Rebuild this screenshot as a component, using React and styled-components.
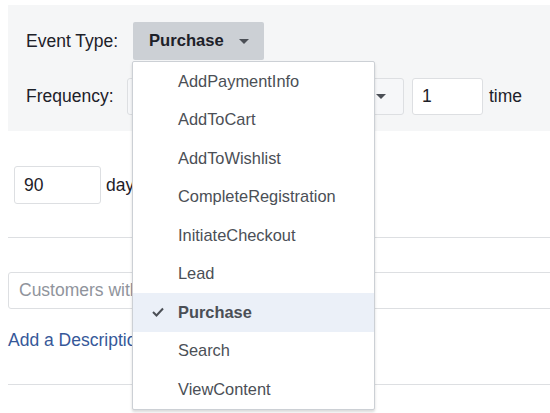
import React from "react"
import styled, { createGlobalStyle } from "styled-components"

const GlobalStyle = createGlobalStyle`
  html, body {
    margin: 0;
    padding: 0;
    background: #fff;
    overflow: hidden;
  }
  body {
    font-family: "Liberation Sans", Helvetica, Arial, sans-serif;
    font-size: 17.5px;
    color: #1d2129;
  }
`

const Page = styled.div`
  width: 620px;
  min-height: 413px;
  padding: 5px 0 0 8px;
  box-sizing: border-box;
`

const Panel = styled.div`
  background: #f5f6f7;
  padding: 17px 18px 16px;
  display: flex;
  flex-direction: column;
  gap: 18px;
`

const Row = styled.div`
  display: flex;
  align-items: center;
  height: ${p => p.h || 38}px;
`

const Label = styled.span`
  flex: 0 0 ${p => p.w}px;
  color: #1d2129;
  white-space: nowrap;
`

const DropWrap = styled.div`
  position: relative;
`

const TypeButton = styled.div`
  display: flex;
  align-items: center;
  width: 131px;
  height: 38px;
  box-sizing: border-box;
  padding: 0 16px;
  background: #ccd0d5;
  border-radius: 2px;
  font-size: 16.6px;
  font-weight: bold;
  color: #1d2129;
`

const Caret = styled.span`
  width: 0;
  height: 0;
  border-left: 5px solid transparent;
  border-right: 5px solid transparent;
  border-top: 5px solid ${p => p.color || "#4b4f56"};
  margin-left: ${p => p.ml || 14}px;
`

const Select = styled.div`
  width: 277px;
  height: 37px;
  box-sizing: border-box;
  border: 1px solid #dddfe2;
  border-radius: 3px;
  background: #f6f7f9;
  display: flex;
  align-items: center;
  justify-content: flex-end;
  padding-right: 17px;
`

const Input = styled.div`
  width: ${p => p.w}px;
  height: ${p => p.h || 38}px;
  box-sizing: border-box;
  border: 1px solid #dddfe2;
  border-radius: 3px;
  background: #fff;
  display: flex;
  align-items: center;
  padding-left: ${p => p.pl || 9}px;
  color: ${p => (p.placeholder ? "#90949c" : "#1d2129")};
  margin-left: ${p => p.ml || 0}px;
  white-space: nowrap;
  overflow: hidden;
`

const Unit = styled.span`
  margin-left: ${p => p.ml}px;
  white-space: nowrap;
`

const Section = styled.div`
  padding-left: ${p => p.pl || 0}px;
  margin-top: ${p => p.mt || 0}px;
`

const Divider = styled.div`
  height: 1px;
  background: #dddfe2;
  margin-top: ${p => p.mt}px;
`

const DescLink = styled.a`
  display: block;
  margin-top: 20px;
  color: #365899;
  text-decoration: none;
  line-height: 22px;
`

const Menu = styled.ul`
  position: absolute;
  top: 39px;
  left: -1px;
  width: 241px;
  margin: 0;
  padding: 0;
  list-style: none;
  background: #fff;
  border: 1px solid #ccd0d5;
  border-radius: 2px;
  box-shadow: 0 2px 3px rgba(0, 0, 0, 0.15);
  font-size: 16.4px;
  z-index: 10;
`

const Item = styled.li`
  position: relative;
  height: 38.5px;
  display: flex;
  align-items: center;
  padding-left: 45px;
  color: #4b4f56;
  font-weight: ${p => (p.selected ? "bold" : "normal")};
  background: ${p => (p.selected ? "#ebf0f8" : "transparent")};
`

const Check = styled.svg`
  position: absolute;
  left: 19px;
  top: 50%;
  margin-top: -5px;
`

const events = [
  "AddPaymentInfo",
  "AddToCart",
  "AddToWishlist",
  "CompleteRegistration",
  "InitiateCheckout",
  "Lead",
  "Purchase",
  "Search",
  "ViewContent",
]

const App = () => {
  const current = "Purchase"
  return (
    <Page>
      <GlobalStyle />
      <Panel>
        <Row>
          <Label w={107}>Event Type:</Label>
          <DropWrap>
            <TypeButton>
              {current}
              <Caret color="#4b4f56" ml={15} />
            </TypeButton>
            <Menu>
              {events.map(ev => (
                <Item key={ev} selected={ev === current}>
                  {ev === current && (
                    <Check width="12" height="10" viewBox="0 0 12 10">
                      <polyline
                        points="1,5 4.5,8.5 11,1.5"
                        fill="none"
                        stroke="#4b4f56"
                        strokeWidth="2"
                      />
                    </Check>
                  )}
                  {ev}
                </Item>
              ))}
            </Menu>
          </DropWrap>
        </Row>
        <Row h={37}>
          <Label w={101}>Frequency:</Label>
          <Select>
            <Caret />
          </Select>
          <Input w={71} h={37} ml={8}>1</Input>
          <Unit ml={6}>time</Unit>
        </Row>
      </Panel>
      <Section pl={6} mt={35}>
        <Row>
          <Input w={87}>90</Input>
          <Unit ml={5}>days</Unit>
        </Row>
      </Section>
      <Divider mt={33} />
      <Section mt={34}>
        <Input w={612} h={37} placeholder="1" pl={10}>
          Customers with Purchase in the last 90 days
        </Input>
        <DescLink href="#">Add a Description</DescLink>
      </Section>
      <Divider mt={33} />
    </Page>
  )
}

export default App
